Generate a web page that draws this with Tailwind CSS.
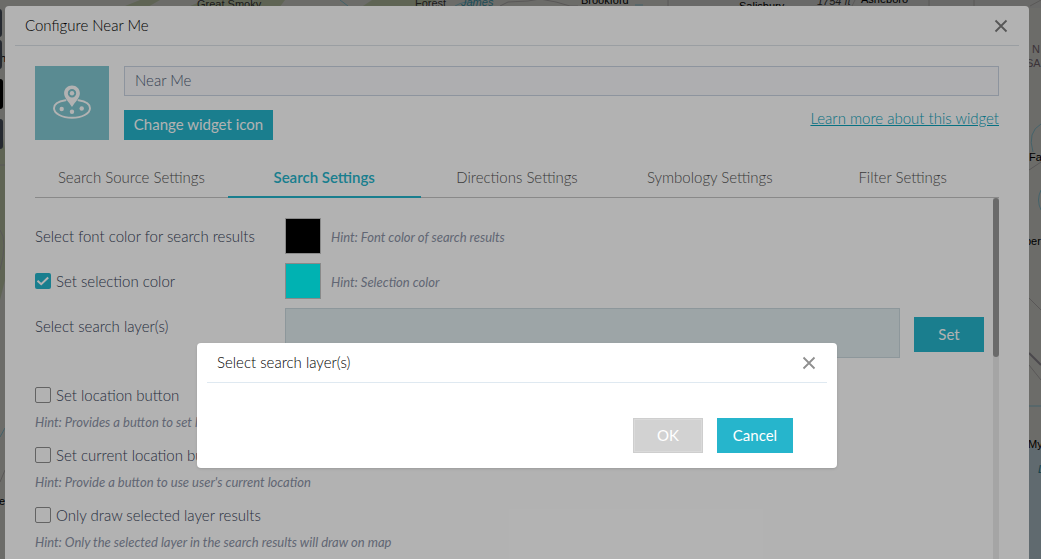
<!DOCTYPE html>
<html lang="en">
<head>
  <meta charset="UTF-8" />
  <meta name="viewport" content="width=device-width, initial-scale=1.0" />
  <title>Configure Near Me</title>
  <script src="https://cdn.jsdelivr.net/npm/@tailwindcss/browser@4"></script>
</head>
<body class="relative h-screen overflow-hidden bg-[#dfdfd9] font-['Lato',sans-serif] text-[15px] leading-5 font-light text-[#364258]">

  <!-- Map -->
  <svg class="absolute inset-0 h-full w-full" viewBox="0 0 1041 559" preserveAspectRatio="none" aria-hidden="true">
    <rect width="1041" height="559" fill="#dfdfd9" />
    <path d="M120 8 140 0h20l-14 8zM185 8l20-8h48l-15 8zM240 8l15-8h30l-6 8zM360 8l12-8h65l-22 8zM0 120l5 30v130l-5 20z" fill="#c3cfae" />
    <rect x="670" width="371" height="8" fill="#d9d9d6" />
    <path d="M1029 447h12v112h-12z" fill="#c6dbe4" />
    <g fill="none" stroke="#b8b4b4">
      <path d="M500 6l8-4 20-1 12-2 16 3 14 4h8M668 0v6M855 0l-3 6M929 0v6M974 0v6M1030 6l11-6M1029 298l12 12M1029 365l12 15M1029 170l12-8M0 165h5M0 230q8 10 0 40M5 470l-5 12" />
      <path d="M1029 353l12 12" stroke-width="2" stroke="#9a949c" />
    </g>
    <g fill="none" stroke="#8ccbdc">
      <path d="M340 0l8 6M455 6q10-6 20-3M635 5h8M1041 124q-14 8-8 28 M1041 190q-5 10 0 20M1029 406l12 0M0 437l5-9" />
    </g>
    <g class="font-['Liberation_Sans',sans-serif] text-[11px] font-normal" fill="#3a3a3a">
      <text x="197" y="8">Great Smoky</text>
      <text x="415" y="7">Forest</text>
      <text x="461" y="6" fill="#3f9fb5" font-style="italic">James</text>
      <text x="581" y="4" fill="#000">Brookford</text>
      <text x="739" y="10" fill="#000">Salisbury</text>
      <text x="817" y="5" font-style="italic">1754 ft</text>
      <text x="861" y="3" fill="#000">Asheboro</text>
      <text x="1032" y="53" fill="#7b6b76">N</text>
      <text x="1026" y="67" fill="#7b6b76">SA</text>
      <text x="1029" y="161" fill="#000">Fa</text>
      <text x="1025" y="245" fill="#000">per</text>
      <text x="1028" y="448" fill="#000">My</text>
      <text x="1038" y="473" fill="#2a8a9b" font-style="italic">L</text>
      <text x="0" y="62" fill="#000">h</text>
      <text x="-1" y="505" fill="#000">e</text>
    </g>
    <g fill="#4c5663">
      <rect x="-10" y="9" width="12" height="28" rx="3" />
      <rect x="-10" y="40" width="12" height="29" rx="3" />
      <rect x="-10" y="79" width="13" height="30" rx="3" fill="#000" />
      <rect x="-10" y="119" width="13" height="30" rx="3" />
    </g>
  </svg>
  <div class="absolute inset-0 bg-black/30"></div>

  <!-- Configure widget dialog -->
  <section class="relative mt-1.5 mr-3 ml-[5px] flex h-full flex-col rounded bg-white" aria-labelledby="dialogTitle">
    <header class="mx-2.5 flex h-10 shrink-0 items-center justify-between border-b border-[#dde2e9] px-2.5">
      <h1 id="dialogTitle" class="pb-0.5 font-light text-black">Configure Near Me</h1>
      <button type="button" aria-label="Close" class="text-[#7c7c7c]">
        <svg class="size-4" viewBox="0 0 16 16" fill="none" stroke="currentColor" stroke-width="1.8"><path d="M2.500 2.500l11 11M13.500 2.500l-11 11" /></svg>
      </button>
    </header>

    <div class="flex min-h-0 flex-1 flex-col px-[30px] pt-5">
      <div class="flex gap-[15px]">
        <div class="flex size-[74px] shrink-0 items-center justify-center bg-[#81c8d1]">
          <svg class="h-9 w-10" viewBox="0 0 40 36" fill="none">
            <path d="M13.500 15.300C6.500 16.400 2 19.400 2 23.300 2 28.500 10 32.800 20 32.800s18-4.300 18-9.500c0-3.900-4.500-6.900-11.500-8" stroke="#fff" stroke-width="1.900" stroke-linecap="round" />
            <path fill="#fff" fill-rule="evenodd" d="M20 .5c-4.400 0-7.900 3.400-7.900 7.700 0 4.700 4.800 8.600 7.900 13.800 3.100-5.200 7.900-9.100 7.900-13.800C27.900 3.900 24.400.5 20 .5zm0 3.500a4.200 4.200 0 1 1 0 8.400 4.200 4.200 0 0 1 0-8.400z" />
            <circle cx="20" cy="8.200" r="2.200" fill="#fff" />
            <circle cx="9.700" cy="24" r="2.200" fill="#fff" />
            <circle cx="20" cy="26.800" r="2.200" fill="#fff" />
            <circle cx="29.700" cy="23.500" r="2.200" fill="#fff" />
          </svg>
        </div>
        <div class="flex flex-1 flex-col gap-3.5">
          <input type="text" value="Near Me" aria-label="Widget name" class="h-[30px] w-full border border-[#cbd5e2] bg-[#f9f9fc] px-2.5 pb-0.5 text-[#4f5e78]" />
          <div class="flex items-start justify-between">
            <button type="button" class="h-[30px] w-[149px] bg-[#26b5cc] pb-0.5 font-normal text-white">Change widget icon</button>
            <a href="#" class="mt-[-2px] text-[#0aa3bb] underline">Learn more about this widget</a>
          </div>
        </div>
      </div>

      <nav class="mt-4 grid h-[42px] shrink-0 grid-cols-5 border-b border-[#c4c4c4] text-center text-[#545454]" role="tablist">
        <button type="button" role="tab">Search Source Settings</button>
        <button type="button" role="tab" aria-selected="true" class="-mb-px border-b-2 border-[#24b5cc] pt-px font-semibold text-[#24b5cc]">Search Settings</button>
        <button type="button" role="tab">Directions Settings</button>
        <button type="button" role="tab">Symbology Settings</button>
        <button type="button" role="tab">Filter Settings</button>
      </nav>

      <div class="flex min-h-0 flex-1">
        <div class="flex-1 pt-5 pr-[9px]">
          <div class="grid grid-cols-[250px_1fr] gap-y-[9px]">
            <label for="fontColor" class="self-center">Select font color for search results</label>
            <div class="flex items-center gap-2.5">
              <button id="fontColor" type="button" aria-label="Font color" class="size-9 border border-[#c4c4c4] bg-black"></button>
              <p class="pt-0.5 text-[13px] font-normal text-[#8b93a6] italic">Hint: Font color of search results</p>
            </div>

            <label class="flex items-center gap-[5px]">
              <input type="checkbox" checked class="peer sr-only" />
              <svg class="size-4 rounded-xs bg-[#24b5cc]" viewBox="0 0 16 16" fill="none" stroke="#fff" stroke-width="2"><path d="M2.500 7.800l3.700 3.400 7-6.700" /></svg>
              Set selection color
            </label>
            <div class="flex items-center gap-2.5">
              <button type="button" aria-label="Selection color" class="size-9 border border-[#c4c4c4] bg-[#00ffff]"></button>
              <p class="pt-0.5 text-[13px] font-normal text-[#8b93a6] italic">Hint: Selection color</p>
            </div>

            <span class="pt-2">Select search layer(s)</span>
            <div class="flex items-center gap-3.5">
              <div class="h-[50px] flex-1 border border-[#cbd8df] bg-[#e1ecf0]"></div>
              <button type="button" class="mt-0.5 h-[35px] w-[70px] bg-[#26b5cc] font-normal text-white">Set</button>
            </div>
          </div>

          <div class="mt-[27px] flex flex-col gap-[13px]">
            <div>
              <label class="flex items-center gap-[5px]"><input type="checkbox" class="size-4 appearance-none rounded-xs border border-[#8f8f8f]" />Set location button</label>
              <p class="mt-[7px] text-[13px] font-normal text-[#8b93a6] italic">Hint: Provides a button to set location</p>
            </div>
            <div>
              <label class="flex items-center gap-[5px]"><input type="checkbox" class="size-4 appearance-none rounded-xs border border-[#8f8f8f]" />Set current location button</label>
              <p class="mt-[7px] text-[13px] font-normal text-[#8b93a6] italic">Hint: Provide a button to use user's current location</p>
            </div>
            <div>
              <label class="flex items-center gap-[5px]"><input type="checkbox" class="size-4 appearance-none rounded-xs border border-[#8f8f8f]" />Only draw selected layer results</label>
              <p class="mt-[7px] text-[13px] font-normal text-[#8b93a6] italic">Hint: Only the selected layer in the search results will draw on map</p>
            </div>
          </div>
        </div>
        <!-- scrollbar -->
        <div class="w-1.5 bg-[#ededed]"><div class="h-[159px] rounded-full bg-[#999]"></div></div>
      </div>
    </div>
  </section>

  <!-- Layer picker -->
  <div class="absolute inset-0 flex items-start justify-center bg-black/30 pt-[343px] pr-[7px]">
    <section class="w-[640px] rounded bg-white px-2.5 pb-[15px] shadow-sm" role="dialog" aria-labelledby="pickerTitle">
      <header class="flex h-10 items-center justify-between border-b border-[#dfe9f1] px-2.5">
        <h2 id="pickerTitle" class="pb-0.5 font-light text-black">Select search layer(s)</h2>
        <button type="button" aria-label="Close" class="text-[#8f8f8f]">
          <svg class="size-4" viewBox="0 0 16 16" fill="none" stroke="currentColor" stroke-width="1.8"><path d="M2.500 2.500l11 11M13.500 2.500l-11 11" /></svg>
        </button>
      </header>
      <div class="mt-[35px] mr-[34px] flex justify-end gap-3.5 font-normal text-white">
        <button type="button" disabled class="h-[35px] w-[70px] border border-[#cecece] bg-[#d2d2d2] pb-0.5 inset-ring inset-ring-[#dadada]">OK</button>
        <button type="button" class="h-[35px] w-[76px] bg-[#26b5cc] pb-0.5">Cancel</button>
      </div>
    </section>
  </div>
</body>
</html>
